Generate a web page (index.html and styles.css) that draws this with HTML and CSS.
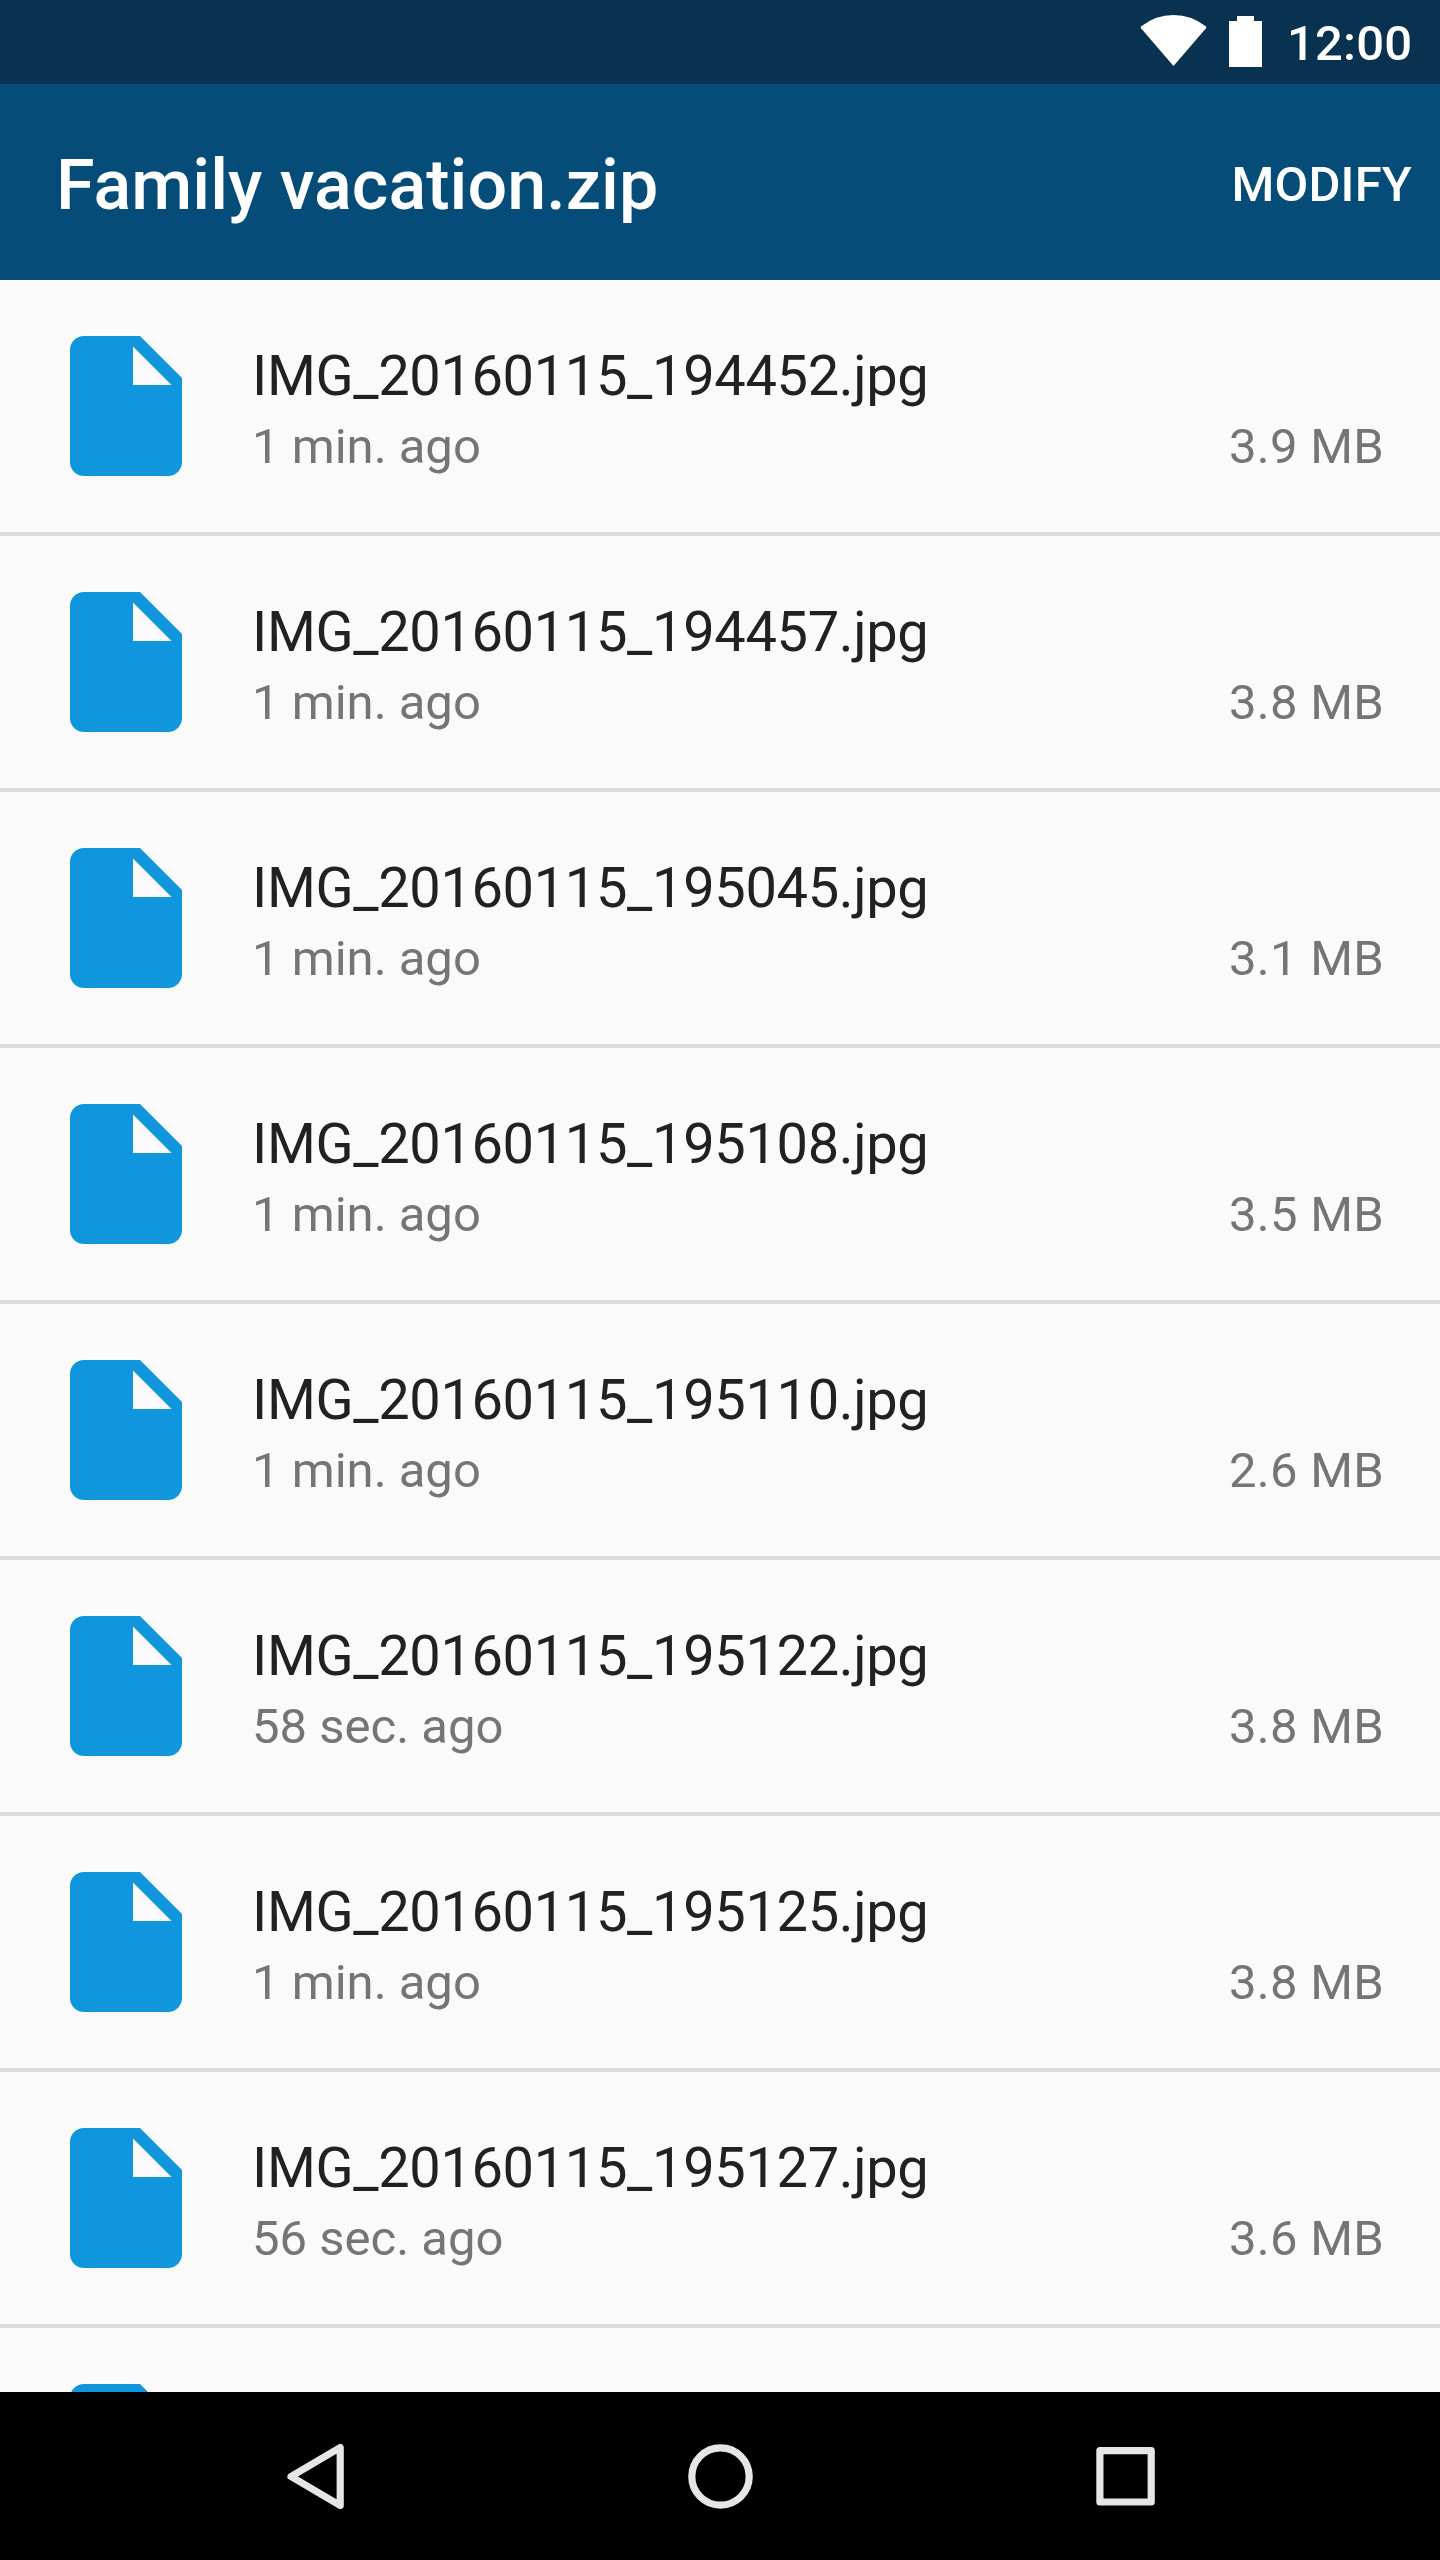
FILE: index.html
```html
<!DOCTYPE html>
<html lang="en">
<head>
<meta charset="utf-8">
<title>Family vacation.zip</title>
<link rel="stylesheet" href="styles.css">
</head>
<body>
<svg class="defs" width="0" height="0" aria-hidden="true">
  <symbol id="file" viewBox="0 0 112 140">
    <path fill-rule="evenodd" d="M14 0H70L112 42V126A14 14 0 0 1 98 140H14A14 14 0 0 1 0 126V14A14 14 0 0 1 14 0ZM63 10.5V49H101.5Z"/>
  </symbol>
</svg>
<div class="screen">
  <div class="status">
    <svg class="wifi" width="68" height="52" viewBox="0 0 68 52"><path d="M33.500 51L1 13.200Q.3 12.200 1.300 11.300Q15.500 0 33.500 0T65.700 11.300Q66.700 12.200 66 13.200Z"/></svg>
    <svg class="battery" width="33" height="51" viewBox="0 0 33 51"><path d="M8 0H25V5H33V51H0V5H8Z"/></svg>
    <span class="clock">12:00</span>
  </div>
  <header class="appbar">
    <h1 class="title">Family vacation.zip</h1>
    <button class="action">MODIFY</button>
  </header>
  <main class="list">
    <div class="row"><svg class="icon"><use href="#file"/></svg><div class="info"><div class="name">IMG_20160115_194452.jpg</div><div class="meta"><span>1 min. ago</span><span class="size">3.9 MB</span></div></div></div>
    <div class="row"><svg class="icon"><use href="#file"/></svg><div class="info"><div class="name">IMG_20160115_194457.jpg</div><div class="meta"><span>1 min. ago</span><span class="size">3.8 MB</span></div></div></div>
    <div class="row"><svg class="icon"><use href="#file"/></svg><div class="info"><div class="name">IMG_20160115_195045.jpg</div><div class="meta"><span>1 min. ago</span><span class="size">3.1 MB</span></div></div></div>
    <div class="row"><svg class="icon"><use href="#file"/></svg><div class="info"><div class="name">IMG_20160115_195108.jpg</div><div class="meta"><span>1 min. ago</span><span class="size">3.5 MB</span></div></div></div>
    <div class="row"><svg class="icon"><use href="#file"/></svg><div class="info"><div class="name">IMG_20160115_195110.jpg</div><div class="meta"><span>1 min. ago</span><span class="size">2.6 MB</span></div></div></div>
    <div class="row"><svg class="icon"><use href="#file"/></svg><div class="info"><div class="name">IMG_20160115_195122.jpg</div><div class="meta"><span>58 sec. ago</span><span class="size">3.8 MB</span></div></div></div>
    <div class="row"><svg class="icon"><use href="#file"/></svg><div class="info"><div class="name">IMG_20160115_195125.jpg</div><div class="meta"><span>1 min. ago</span><span class="size">3.8 MB</span></div></div></div>
    <div class="row"><svg class="icon"><use href="#file"/></svg><div class="info"><div class="name">IMG_20160115_195127.jpg</div><div class="meta"><span>56 sec. ago</span><span class="size">3.6 MB</span></div></div></div>
    <div class="row"><svg class="icon"><use href="#file"/></svg></div>
  </main>
  <nav class="navbar">
    <svg class="key" viewBox="0 0 84 84"><path d="M67.200 13.500V71.500L18 42.500Z"/></svg>
    <svg class="key" viewBox="0 0 84 84"><circle cx="42.500" cy="42.500" r="28.700"/></svg>
    <svg class="key" viewBox="0 0 84 84"><rect x="16.900" y="16.700" width="51.300" height="51.300"/></svg>
  </nav>
</div>
</body>
</html>
```
FILE: styles.css
```css
* { box-sizing: border-box; }
body {
  margin: 0;
  background: #fafafa;
  font-family: Roboto, "Noto Sans", sans-serif;
}
.defs { display: block; height: 0; }
.screen {
  display: flex;
  flex-direction: column;
  width: 1440px;
  height: 2560px;
  overflow: hidden;
}
.status {
  display: flex;
  flex: none;
  height: 84px;
  padding: 0 28px;
  justify-content: flex-end;
  background: #093250;
  color: #fff;
  fill: #fff;
}
.wifi { margin: 15px 21px 0 0; }
.battery { margin: 16px 25px 0 0; }
.clock {
  width: 125px;
  padding-top: 4px;
  font-size: 49px;
  font-weight: 500;
  letter-spacing: 0.2px;
  line-height: 80px;
  text-align: right;
}
.appbar {
  display: flex;
  flex: none;
  height: 196px;
  padding: 0 28px 0 56px;
  align-items: center;
  justify-content: space-between;
  background: #054c78;
  color: #fff;
}
.title {
  margin: 0;
  padding-top: 6px;
  font-size: 70px;
  font-weight: 500;
  line-height: 82px;
  letter-spacing: 0.05px;
}
.action {
  margin: 0;
  padding: 5px 0 0;
  border: 0;
  background: none;
  color: inherit;
  font: 500 49px/58px Roboto, "Noto Sans", sans-serif;
  letter-spacing: 0.2px;
}
.list {
  flex: 1;
  min-height: 0;
  overflow: hidden;
}
.row {
  display: flex;
  height: 256px;
  padding: 56px 56px 0 70px;
  gap: 70px;
  border-bottom: 4px solid #dcdcdc;
}
.icon {
  flex: none;
  width: 112px;
  height: 140px;
  fill: #1096dc;
}
.info {
  flex: 1;
  padding-top: 7px;
}
.name {
  color: #212121;
  font-size: 56px;
  line-height: 66px;
  letter-spacing: -0.35px;
}
.meta {
  display: flex;
  margin-top: 9px;
  justify-content: space-between;
  color: #757575;
  font-size: 49px;
  line-height: 58px;
}
.size { letter-spacing: 0.25px; }
.navbar {
  display: grid;
  flex: none;
  height: 168px;
  grid-template-columns: repeat(3, 405px);
  justify-content: center;
  align-items: center;
  justify-items: center;
  background: #000;
}
.key {
  width: 84px;
  height: 84px;
  fill: none;
  stroke: #e6e6e6;
  stroke-width: 7.200px;
  stroke-linejoin: round;
}
```
